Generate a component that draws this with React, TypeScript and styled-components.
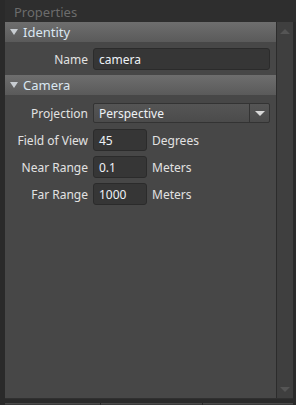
import React from 'react';
import styled, { createGlobalStyle } from 'styled-components';

const Global = createGlobalStyle`
  html, body {
    margin: 0;
    padding: 0;
    background: #2a2a2a;
  }
  body {
    font-family: "Noto Sans", "Open Sans", sans-serif;
    font-size: 12px;
  }
`;

const Frame = styled.div`
  width: 296px;
  height: 405px;
  display: flex;
  flex-direction: column;
  background: #2a2a2a;
  padding-left: 5px;
  box-sizing: border-box;
  overflow: hidden;
`;

const TitleBar = styled.div`
  height: 22px;
  flex: none;
  box-sizing: border-box;
  display: flex;
  align-items: flex-end;
  padding: 0 0 2px 9px;
  background: #2e2e2e;
  color: #6c6c6c;
  font-size: 13px;
  line-height: 16px;
`;

const Panel = styled.div`
  height: 376px;
  flex: none;
  display: flex;
  border-bottom: 1px solid #303030;
  margin-right: 3px;
`;

const Content = styled.div`
  flex: 1;
  background: #474747;
  display: flex;
  flex-direction: column;
`;

const SectionHeader = styled.div`
  height: 20px;
  display: flex;
  align-items: center;
  gap: 5px;
  padding-left: 5px;
  background: linear-gradient(#6e6e6e, #5a5a5a);
  color: #dbe7f1;
  font-size: 13px;
`;

const Arrow = styled.span`
  width: 0;
  height: 0;
  border-left: 4px solid transparent;
  border-right: 4px solid transparent;
  border-top: 6px solid #c8cdd2;
`;

const Rows = styled.div<{ $top: number; $bottom: number }>`
  display: flex;
  flex-direction: column;
  gap: 5px;
  padding: ${p => `${p.$top}px 0 ${p.$bottom}px`};
`;

const Row = styled.div`
  display: flex;
  align-items: center;
  height: 22px;
`;

const Label = styled.div`
  width: 83px;
  text-align: right;
  color: #e2e2e2;
  padding-right: 5px;
  white-space: nowrap;
`;

const Field = styled.div<{ $w?: number }>`
  width: ${p => (p.$w ? `${p.$w}px` : '177px')};
  height: 22px;
  box-sizing: border-box;
  background: #363636;
  border: 1px solid #2b2b2b;
  border-radius: 3px;
  color: #eef2f6;
  display: flex;
  align-items: center;
  padding-left: 5px;
`;

const Select = styled.div`
  width: 177px;
  height: 20px;
  box-sizing: border-box;
  background: linear-gradient(#555555, #4b4b4b);
  border: 1px solid #333333;
  border-radius: 2px;
  display: flex;
  color: #eef2f6;
`;

const SelectValue = styled.div`
  flex: 1;
  display: flex;
  align-items: center;
  padding-left: 5px;
`;

const SelectButton = styled.div`
  width: 19px;
  border-left: 1px solid #333333;
  display: flex;
  align-items: center;
  justify-content: center;
`;

const SmallArrow = styled.span<{ $c?: string; $up?: boolean }>`
  width: 0;
  height: 0;
  border-left: 5px solid transparent;
  border-right: 5px solid transparent;
  ${p => (p.$up ? 'border-bottom' : 'border-top')}: 5px solid ${p => p.$c ?? '#d8d8d8'};
`;

const Unit = styled.div`
  color: #e2e2e2;
  padding-left: 5px;
`;

const ScrollBar = styled.div`
  width: 17px;
  background: #3f3f3f;
  border-left: 1px solid #2c2c2c;
  display: flex;
  flex-direction: column;
  justify-content: space-between;
  align-items: center;
  padding: 7px 0 6px;
  box-sizing: border-box;
`;

const BottomBar = styled.div`
  flex: 1;
  display: flex;
  gap: 1px;
  padding-top: 4px;
  margin-right: 3px;
`;

const Tab = styled.div<{ $w: number }>`
  width: ${p => p.$w}px;
  background: #3a3a3a;
  border-top: 1px solid #4a4a4a;
`;

export default function App() {
  return (
    <>
      <Global />
      <Frame>
        <TitleBar>Properties</TitleBar>
        <Panel>
          <Content>
            <SectionHeader>
              <Arrow />
              Identity
            </SectionHeader>
            <Rows $top={6} $bottom={5}>
              <Row>
                <Label>Name</Label>
                <Field>camera</Field>
              </Row>
            </Rows>
            <SectionHeader>
              <Arrow />
              Camera
            </SectionHeader>
            <Rows $top={7} $bottom={5}>
              <Row>
                <Label>Projection</Label>
                <Select>
                  <SelectValue>Perspective</SelectValue>
                  <SelectButton>
                    <SmallArrow />
                  </SelectButton>
                </Select>
              </Row>
              <Row>
                <Label>Field of View</Label>
                <Field $w={54}>45</Field>
                <Unit>Degrees</Unit>
              </Row>
              <Row>
                <Label>Near Range</Label>
                <Field $w={54}>0.1</Field>
                <Unit>Meters</Unit>
              </Row>
              <Row>
                <Label>Far Range</Label>
                <Field $w={54}>1000</Field>
                <Unit>Meters</Unit>
              </Row>
            </Rows>
          </Content>
          <ScrollBar>
            <SmallArrow $up $c="#555555" />
            <SmallArrow $c="#555555" />
          </ScrollBar>
        </Panel>
        <BottomBar>
          <Tab $w={95} />
          <Tab $w={101} />
          <Tab $w={90} />
        </BottomBar>
      </Frame>
    </>
  );
}
